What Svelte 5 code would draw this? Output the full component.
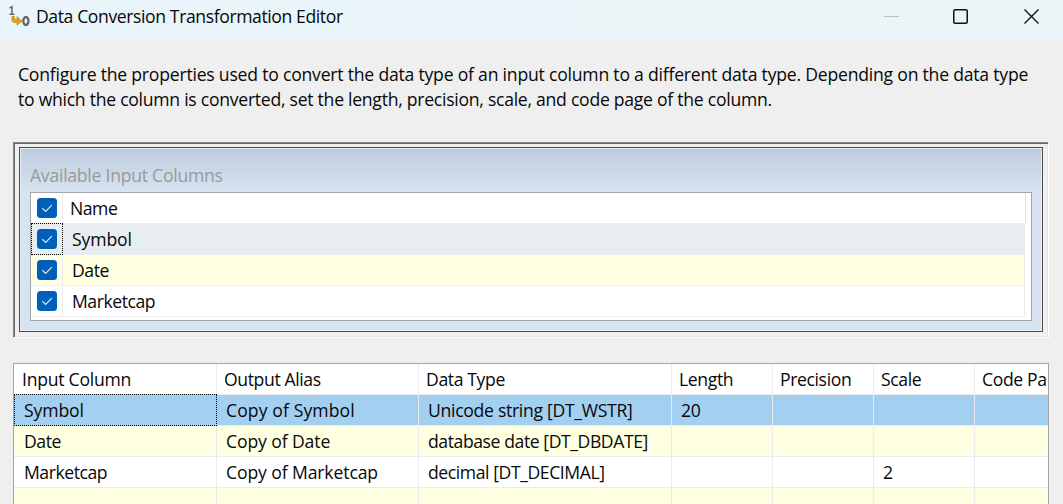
<script>
  const inputs = ['Name', 'Symbol', 'Date', 'Marketcap'];
  const headers = ['Input Column', 'Output Alias', 'Data Type', 'Length', 'Precision', 'Scale', 'Code Pa'];
  const rows = [
    ['Symbol', 'Copy of Symbol', 'Unicode string [DT_WSTR]', '20', '', '', ''],
    ['Date', 'Copy of Date', 'database date [DT_DBDATE]', '', '', '', ''],
    ['Marketcap', 'Copy of Marketcap', 'decimal [DT_DECIMAL]', '', '', '2', ''],
    ['', '', '', '', '', '', '']
  ];
</script>

<div class="window">
  <header class="titlebar">
    <svg class="logo" width="24" height="24" viewBox="0 0 24 24">
      <path d="M1.500 3.200 4 1.700V9M1.500 9.200h5" fill="none" stroke="#666" stroke-width="1.500" />
      <path d="M4 11.500v3.500c0 1.800 1 2.500 2.500 2.500h2.500v2.700l5-4.200-5-4.500v3H6.500v-3z" fill="#e8a312" stroke="#bd8524" stroke-width=".7" />
      <ellipse cx="17.900" cy="16" rx="2.600" ry="4" fill="none" stroke="#666" stroke-width="2.300" />
    </svg>
    <h1>Data Conversion Transformation Editor</h1>
    <svg class="controls" width="203" height="39" viewBox="0 0 203 39" fill="none">
      <path d="M24 16.500h15" stroke="#b9c0c2" />
      <rect x="93.750" y="9.750" width="13.500" height="13.500" rx="1.500" stroke="#111" stroke-width="1.500" />
      <path d="m164.500 9.500 14 14m0-14-14 14" stroke="#111" stroke-width="1.400" />
    </svg>
  </header>

  <p class="intro">
    <span class="line one">Configure the properties used to convert the data type of an input column to a different data type. Depending on the data type</span>
    <span class="line two">to which the column is converted, set the length, precision, scale, and code page of the column.</span>
  </p>

  <section class="frame">
    <div class="panel">
      <h2>Available Input Columns</h2>
      <div class="list">
        {#each inputs as name, i}
          <div class="item" class:first={i === 0} class:selected={i === 1} class:alt={i === 2}>
            <div class="check">
              <svg width="20" height="20" viewBox="0 0 20 20" fill="none">
                <rect width="20" height="20" rx="3.500" fill="#005fb8" />
                <path d="m5.300 10.200 3.300 3.300 6.200-6.300" stroke="#e8f2fb" stroke-width="1.100" />
              </svg>
            </div>
            <div class="name">{name}</div>
          </div>
        {/each}
      </div>
    </div>
  </section>

  <div class="table">
    {#each headers as h, c}<div class="cell head" class:leading={c === 0}>{h}</div>{/each}
    {#each rows as row, r}
      {#each row as value, c}
        <div class="cell" class:current={r === 0} class:alt={r % 2 === 1} class:focus={r === 0 && c === 0} class:input={c === 0} class:alias={c === 1} class:type={c === 2}>{value}</div>
      {/each}
    {/each}
  </div>
</div>

<style>
  :global(body) { margin: 0; overflow: hidden; }
  .window {
    width: 1063px; height: 504px; overflow: hidden; background: #efefef; color: #080808;
    font: 17.6px/31px "Open Sans", "Noto Sans", sans-serif; letter-spacing: -.25px;
  }
  .window *, .window { box-sizing: border-box; }
  h1, h2, p { margin: 0; font: inherit; }
  .titlebar { display: flex; height: 39px; background: linear-gradient(90deg, #e9f5fb, #e9f5f8 50%, #eaf5f7); }
  .logo { margin: 5px 0 0 8px; flex: none; }
  h1 { margin: 1px 0 0 4px; white-space: nowrap; letter-spacing: -.4px; }
  .controls { margin-left: auto; flex: none; }
  .intro { height: 103px; padding: 23px 0 0 18px; line-height: 25px; }
  .line { display: block; white-space: nowrap; }
  .one { letter-spacing: -.215px; }
  .two { letter-spacing: -.265px; }
  .frame {
    width: 1036px; height: 196px; margin-left: 13px; padding: 4px 5px 5px; background: #f1f0f0;
    border: 1px solid; border-color: #858585 #fff #fff #858585;
    box-shadow: inset 1px 1px #696969, inset -1px -1px #e3e3e3;
  }
  .panel {
    height: 185px; border: 1px solid #4c4c4c; padding: 12px 10px 0; box-shadow: inset 0 0 0 1px #e8edf2;
    background: linear-gradient(#bdccdc, #d7e3f1 44px);
  }
  h2 { height: 32px; color: #999; }
  .list { height: 129px; background: #fff; border: 1px solid #a5a5aa; }
  .item { display: flex; width: 994px; height: 31px; border-right: 1px solid #eee; letter-spacing: -.45px; }
  .item.first { width: 995px; height: 30px; border-color: #e2e2e2; }
  .check { width: 32px; flex: none; padding: 5px 0 0 6px; border-right: 1px solid #eaeaf0; border-bottom: 1px solid #f0eff3; }
  .first .check { border-bottom: 0; }
  .check svg { display: block; }
  .name { flex: 1; padding-left: 9px; border-bottom: 1px solid #f0eff3; }
  .first .name { padding-left: 7px; border-bottom: 0; }
  .selected .name { background: #e8edf2; border-color: #e8edf2; letter-spacing: -.1px; line-height: 33px; }
  .item.alt { background: #ffffe1; }
  .item.selected { height: 32px; }
  .selected .check { border: 1px dotted #000; padding: 5px 0 0 5px; background: #e8edf2; }
  .table {
    width: 1036px; height: 160px; margin: 25px 0 0 13px; overflow: hidden; background: #fff;
    border: 1px solid #a6a6aa; display: grid;
    grid-template-columns: 203px 202px 253px 101px 101px 101px 101px;
    grid-auto-rows: 31px;
  }
  .cell { padding-left: 9px; white-space: nowrap; overflow: hidden; border-right: 1px solid #ebebef; border-bottom: 1px solid #ebebef; background: #fff; }
  .cell.head { padding-left: 7px; letter-spacing: -.38px; }
  .cell.leading { padding-left: 8px; letter-spacing: -.25px; }
  .input { padding-left: 10px; letter-spacing: -.45px; }
  .alias { letter-spacing: -.12px; }
  .current.alias { letter-spacing: .1px; }
  .type { letter-spacing: -.42px; }
  .current.type { letter-spacing: -.3px; }
  .cell.current { background: #a3cff1; background-clip: padding-box; }
  .cell.alt { background: #ffffe1; }
  .cell.focus {
    height: 32px; margin-top: -1px; padding-left: 9px; border: 1px dotted #000;
    position: relative; background-clip: border-box; letter-spacing: -.1px;
  }
</style>
